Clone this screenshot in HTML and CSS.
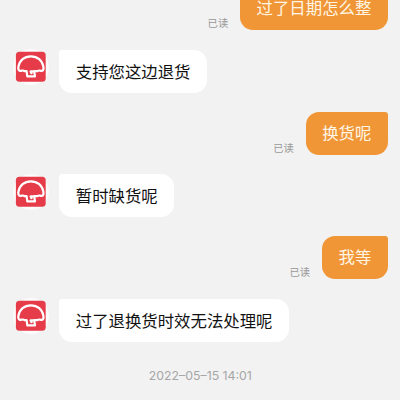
FILE: index.html
```
<!DOCTYPE html>
<html lang="zh-CN">
<head>
<meta charset="utf-8">
<title>Chat</title>
<link rel="stylesheet" href="styles.css">
</head>
<body>
<svg class="defs" width="0" height="0" aria-hidden="true">
  <symbol id="shop" viewBox="0 0 36 36">
    <circle cx="18" cy="18" r="18" fill="#fcfafa"/>
    <rect x="2.9" y="2.8" width="29.8" height="30" rx="3.6" fill="#e63c49"/>
    <path d="M18.9 25.1L17.6 22.4H21.2L22 27.4H14.3L13.6 22.2H11.2C10 20.4 8.4 22.4 6.6 21.7C5.3 21.2 5.1 19.5 5.4 17.8C6.4 11.4 11.4 7.3 17.9 7.3S29.4 11.4 30.4 17.8C30.7 19.5 30.5 21.2 29.2 21.7C27.4 22.4 26 20.4 24.8 22.2H21.2" fill="none" stroke="#fff" stroke-width="2.2" stroke-linejoin="round"/>
  </symbol>
</svg>
<main class="chat">
  <div class="row sent"><span class="read">已读</span><p class="bubble">过了日期怎么整</p></div>
  <div class="row"><svg class="avatar"><use href="#shop"/></svg><p class="bubble">支持您这边退货</p></div>
  <div class="row sent"><span class="read">已读</span><p class="bubble">换货呢</p></div>
  <div class="row"><svg class="avatar"><use href="#shop"/></svg><p class="bubble">暂时缺货呢</p></div>
  <div class="row sent"><span class="read">已读</span><p class="bubble">我等</p></div>
  <div class="row"><svg class="avatar"><use href="#shop"/></svg><p class="bubble">过了退换货时效无法处理呢</p></div>
  <time class="date">2022–05–15 14:01</time>
</main>
</body>
</html>
```
FILE: styles.css
```
html, body {
  margin: 0;
  height: 400px;
  overflow: hidden;
  background: #f2f2f2;
}
.defs { display: block; }
.chat {
  display: flex;
  flex-direction: column;
  gap: 19.25px;
  margin-top: -12.6px;
  padding: 0 12.3px 0 13px;
  font-family: "Noto Sans CJK SC", sans-serif;
}
.row {
  display: flex;
  align-items: flex-start;
  height: 43px;
}
.sent { justify-content: flex-end; align-items: flex-end; }
.avatar {
  width: 36px;
  height: 36px;
  margin: -0.4px 10.4px 0 0;
  flex: none;
}
.bubble {
  box-sizing: border-box;
  height: 43px;
  margin: 0;
  padding: 0 16.4px;
  border-radius: 3px 13px 13px 13px;
  background: #fff;
  color: #111;
  font-size: 16.4px;
  line-height: 43px;
  white-space: nowrap;
}
.sent .bubble {
  border-radius: 13px 3px 13px 13px;
  background: #f09637;
  color: #fff6e6;
  line-height: 41.6px;
}
.read {
  margin: 0 12px 0 0;
  color: #999;
  font-size: 10.3px;
  line-height: 14px;
}
.date {
  align-self: center;
  margin-top: 6px;
  color: #a6a6a6;
  font-family: Inter, sans-serif;
  font-size: 12.3px;
  line-height: 18px;
}
```
